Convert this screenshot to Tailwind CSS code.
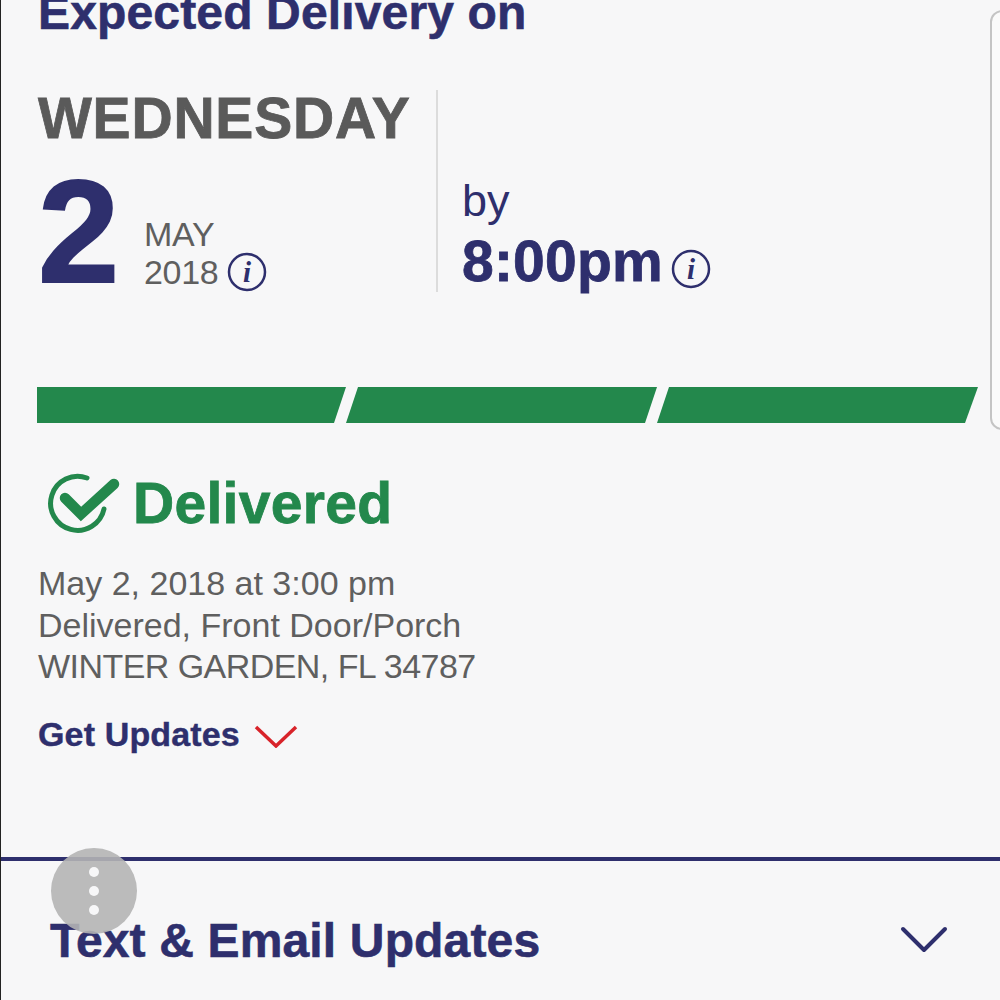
<!doctype html>
<html>
<head>
<meta charset="utf-8">
<script src="https://cdn.jsdelivr.net/npm/@tailwindcss/browser@4"></script>
</head>
<body class="bg-[#f7f7f8]">
<div class="relative h-[1000px] w-[1000px] overflow-hidden border-l border-[#222] bg-[#f7f7f8] font-['Liberation_Sans',Arial,sans-serif]">

  <!-- delivery summary -->
  <div class="pl-[37px]">
    <h1 class="mt-[-12px] h-[50px] text-[48px] font-bold leading-[50px] tracking-[0.15px] text-[#2e2f6d] [-webkit-text-stroke:0.6px_#2e2f6d]">Expected Delivery on</h1>

    <div class="mt-[52px] flex h-[202px]">
      <div class="w-[400px] border-r-2 border-[#dcdcdc]">
        <div class="text-[57px] font-bold leading-[57px] tracking-[0.8px] text-[#5a5a5a] [-webkit-text-stroke:0.8px_#5a5a5a]">WEDNESDAY</div>
        <div class="flex">
          <div class="mt-[12px] w-[106px] text-[146px] font-bold leading-[146px] text-[#2e2f6d] [-webkit-text-stroke:2px_#2e2f6d]">2</div>
          <div class="mt-[69px] text-[34px] leading-[38px] tracking-[-0.3px] text-[#5f5f5f]">
            <div class="leading-[36px]">MAY</div>
            <div class="flex items-center gap-[9px]">
              <span>2018</span>
              <svg class="h-[40px] w-[40px]" viewBox="0 0 40 40" fill="none">
                <circle cx="20" cy="20" r="18" stroke="#2e2f6d" stroke-width="2.5"/>
                <text x="20" y="30" text-anchor="middle" font-family="Liberation Serif" font-style="italic" font-weight="700" font-size="29" fill="#2e2f6d">i</text>
              </svg>
            </div>
          </div>
        </div>
      </div>
      <div class="pl-[24px] pt-[88px] text-[#2e2f6d]">
        <div class="text-[45px] leading-[46px]">by</div>
        <div class="mt-[4px] flex items-center gap-[8px]">
          <span class="text-[57px] font-bold leading-[66px] tracking-[0.2px] [-webkit-text-stroke:0.8px_#2e2f6d]">8:00pm</span>
          <svg class="mt-[16px] h-[40px] w-[40px]" viewBox="0 0 40 40" fill="none">
            <circle cx="20" cy="20" r="18" stroke="#2e2f6d" stroke-width="2.5"/>
            <text x="20" y="30" text-anchor="middle" font-family="Liberation Serif" font-style="italic" font-weight="700" font-size="29" fill="#2e2f6d">i</text>
          </svg>
        </div>
      </div>
    </div>

    <!-- progress -->
    <svg class="ml-[-1px] mt-[95px] block h-[36px] w-[945px]" viewBox="0 0 945 36">
      <polygon points="0,0 309,0 297,36 0,36" fill="#23884c"/>
      <polygon points="321,0 620,0 608,36 309,36" fill="#23884c"/>
      <polygon points="632,0 941,0 928,36 620,36" fill="#23884c"/>
    </svg>

    <!-- status -->
    <div class="mt-[47px] flex items-center text-[#23884c]">
      <svg class="ml-[10px] h-[62px] w-[72px]" viewBox="0 0 72 62" fill="none">
        <path d="M40 6 A27 27 0 1 0 57 37" stroke="currentColor" stroke-width="5" stroke-linecap="round" transform="translate(-1 0)"/>
        <path d="M17 26 L33 42 L66 12" stroke="currentColor" stroke-width="10.5" stroke-linecap="round" stroke-linejoin="miter"/>
      </svg>
      <span class="ml-[13px] text-[57px] font-bold leading-[66px] tracking-[0.3px] [-webkit-text-stroke:0.8px_#23884c]">Delivered</span>
    </div>

    <div class="mt-[27px] text-[34px] leading-[41.5px] text-[#5f5f5f]">
      <div>May 2, 2018 at 3:00 pm</div>
      <div>Delivered, Front Door/Porch</div>
      <div class="tracking-[-0.55px]">WINTER GARDEN, FL 34787</div>
    </div>

    <div class="mt-[26px] flex items-center gap-[14px]">
      <span class="text-[34px] font-bold leading-[40px] tracking-[0.15px] text-[#2e2f6d] [-webkit-text-stroke:0.4px_#2e2f6d]">Get Updates</span>
      <svg class="mt-[4px] h-[24px] w-[44px]" viewBox="0 0 44 24" fill="none">
        <path d="M2 3 L22 22 L42 3" stroke="#d8232a" stroke-width="3.5"/>
      </svg>
    </div>
  </div>

  <!-- text and email section -->
  <div class="mt-[103px] flex items-center justify-between border-t-4 border-[#2e2f6d] pl-[49px] pr-[50px] pt-[51px]">
    <span class="text-[48px] font-bold leading-[58px] tracking-[0.15px] text-[#2e2f6d] [-webkit-text-stroke:0.6px_#2e2f6d]">Text &amp; Email Updates</span>
    <svg class="h-[30px] w-[50px]" viewBox="0 0 50 30" fill="none">
      <path d="M3 3 L24 24 L45 3" stroke="#2e2f6d" stroke-width="4" stroke-linecap="round" stroke-linejoin="round"/>
    </svg>
  </div>

  <!-- floating menu button -->
  <div class="absolute left-[50px] top-[848px] flex h-[86px] w-[86px] flex-col items-center justify-center gap-[9px] rounded-full bg-[#b4b4b4]/90">
    <span class="h-[10px] w-[10px] rounded-full bg-[#f7f7f8]"></span>
    <span class="h-[10px] w-[10px] rounded-full bg-[#f7f7f8]"></span>
    <span class="h-[10px] w-[10px] rounded-full bg-[#f7f7f8]"></span>
  </div>

  <!-- screen edge -->
  <div class="absolute left-[989px] top-[10px] h-[420px] w-[30px] rounded-[12px] border-2 border-[#c4c4c4] bg-[#fafafa]"></div>
</div>
</body>
</html>
